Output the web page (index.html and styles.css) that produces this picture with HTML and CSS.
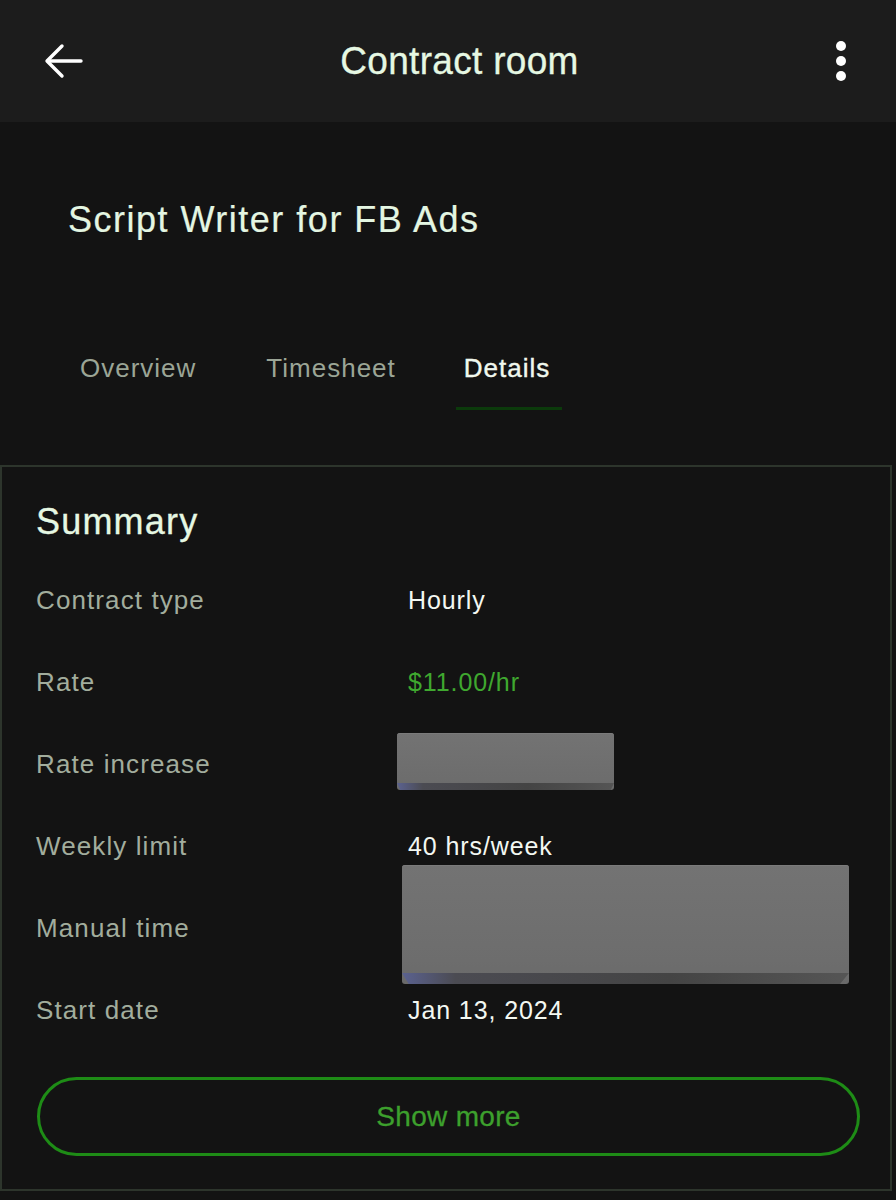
FILE: index.html
```html
<!DOCTYPE html>
<html lang="en">
<head>
<meta charset="utf-8">
<title>Contract room</title>
<link rel="stylesheet" href="styles.css">
</head>
<body>
<header class="topbar">
  <button class="icon-btn back" aria-label="Back">
    <svg width="40" height="36" viewBox="0 0 40 36" fill="none" stroke="#ffffff" stroke-width="3.4" stroke-linecap="round" stroke-linejoin="round">
      <path d="M37 18 H4"/>
      <path d="M18 3 L3 18 L18 33"/>
    </svg>
  </button>
  <h1 class="topbar-title">Contract room</h1>
  <button class="icon-btn more" aria-label="More">
    <svg width="12" height="40" viewBox="0 0 12 40" fill="#ffffff">
      <circle cx="6" cy="5" r="5"/>
      <circle cx="6" cy="20" r="5"/>
      <circle cx="6" cy="35" r="5"/>
    </svg>
  </button>
</header>

<main>
  <h2 class="job-title">Script Writer for FB Ads</h2>

  <nav class="tabs">
    <a class="tab">Overview</a>
    <a class="tab">Timesheet</a>
    <a class="tab active">Details</a>
  </nav>

  <section class="card">
    <h3 class="card-title">Summary</h3>
    <dl class="rows">
      <div class="row"><dt>Contract type</dt><dd>Hourly</dd></div>
      <div class="row"><dt>Rate</dt><dd class="green">$11.00/hr</dd></div>
      <div class="row"><dt>Rate increase</dt><dd><span class="redact redact-small"></span></dd></div>
      <div class="row"><dt>Weekly limit</dt><dd>40 hrs/week</dd></div>
      <div class="row"><dt>Manual time</dt><dd><span class="redact redact-large"></span></dd></div>
      <div class="row"><dt>Start date</dt><dd>Jan 13, 2024</dd></div>
    </dl>
    <button class="show-more">Show more</button>
  </section>
</main>
</body>
</html>
```

FILE: styles.css
```css
* {
  box-sizing: border-box;
}

html, body {
  margin: 0;
  padding: 0;
}

body {
  background: #131313;
  font-family: "Liberation Sans", Arial, sans-serif;
  color: #eef5ee;
  width: 896px;
  height: 1200px;
  overflow: hidden;
}

.topbar {
  height: 122px;
  background: #1c1c1c;
  display: flex;
  align-items: center;
  padding: 0 49px 0 44px;
}

.icon-btn {
  background: none;
  border: 0;
  padding: 0;
  display: flex;
  align-items: center;
  justify-content: center;
  cursor: pointer;
}

.back {
  width: 40px;
  height: 40px;
}

.more {
  width: 12px;
  height: 40px;
}

.topbar-title {
  flex: 1;
  margin: 0;
  text-align: center;
  font-size: 37px;
  font-weight: 400;
  letter-spacing: 0.3px;
  color: #e6f8e3;
  transform: scaleY(1.06);
  -webkit-text-stroke: 0.3px #e6f8e3;
}

.job-title {
  margin: 76px 0 0 68px;
  font-size: 36px;
  line-height: 44px;
  font-weight: 400;
  letter-spacing: 1.5px;
  color: #e4f6e2;
  -webkit-text-stroke: 0.2px #e4f6e2;
}

.tabs {
  display: flex;
  gap: 50px;
  margin: 110px 0 0 70px;
}

.tab {
  padding: 0 10px 23px 10px;
  font-size: 26px;
  line-height: 32px;
  letter-spacing: 1px;
  color: #9ba596;
  border-bottom: 3px solid transparent;
}

.tab.active {
  color: #f0f8ee;
  padding: 0 12px 23px 8px;
  border-bottom-color: #0b3a0b;
  -webkit-text-stroke: 0.4px #f0f8ee;
}

.card {
  margin-top: 55px;
  width: 892px;
  border: 2px solid #2d352c;
  padding: 33px 31px 33px 34px;
}

.card-title {
  margin: 0;
  font-size: 36px;
  line-height: 44px;
  font-weight: 400;
  letter-spacing: 1.2px;
  color: #e6f8e3;
  -webkit-text-stroke: 0.3px #e6f8e3;
}

.rows {
  margin: 15px 0 0 0;
}

.row {
  display: grid;
  grid-template-columns: 372px 1fr;
  height: 82px;
  align-items: center;
}

.row dt,
.row dd {
  margin: 0;
  font-size: 25px;
  line-height: 32px;
}

.row dt {
  color: #a2ad9d;
  font-size: 26px;
  letter-spacing: 1.1px;
}

.row dd {
  color: #f3f8f2;
  position: relative;
  height: 32px;
  letter-spacing: 0.9px;
}

.row dd.green {
  color: #3fa82f;
}

.redact {
  position: absolute;
  display: block;
  border-radius: 3px;
  background: linear-gradient(180deg, #737373 0%, #6d6d6d 80%, #6a6a6a 100%);
  box-shadow: inset 0 1px 0 #7b7b7b;
}

.redact::after {
  content: "";
  position: absolute;
  left: 0;
  right: 0;
  bottom: 0;
  height: 7px;
  background: linear-gradient(90deg, #5b6290 0%, #4b4b52 12%, #444444 60%, #555555 100%);
  clip-path: polygon(0 0, 100% 0, 98.5% 100%, 1.5% 100%);
}

.redact-small {
  left: -11px;
  top: -15px;
  width: 217px;
  height: 57px;
}

.redact-large {
  left: -6px;
  top: -47px;
  width: 447px;
  height: 119px;
}

.redact-large::after {
  height: 11px;
  clip-path: polygon(0 0, 100% 0, 98% 100%, 1.5% 100%);
}

.show-more {
  display: block;
  margin-top: 26px;
  width: 823px;
  margin-left: 1px;
  height: 79px;
  border: 3px solid #1e8c16;
  border-radius: 40px;
  background: transparent;
  font-family: "Liberation Sans", Arial, sans-serif;
  font-size: 28px;
  letter-spacing: 0.3px;
  color: #3da02d;
  -webkit-text-stroke: 0.3px #3da02d;
  cursor: pointer;
}
```
